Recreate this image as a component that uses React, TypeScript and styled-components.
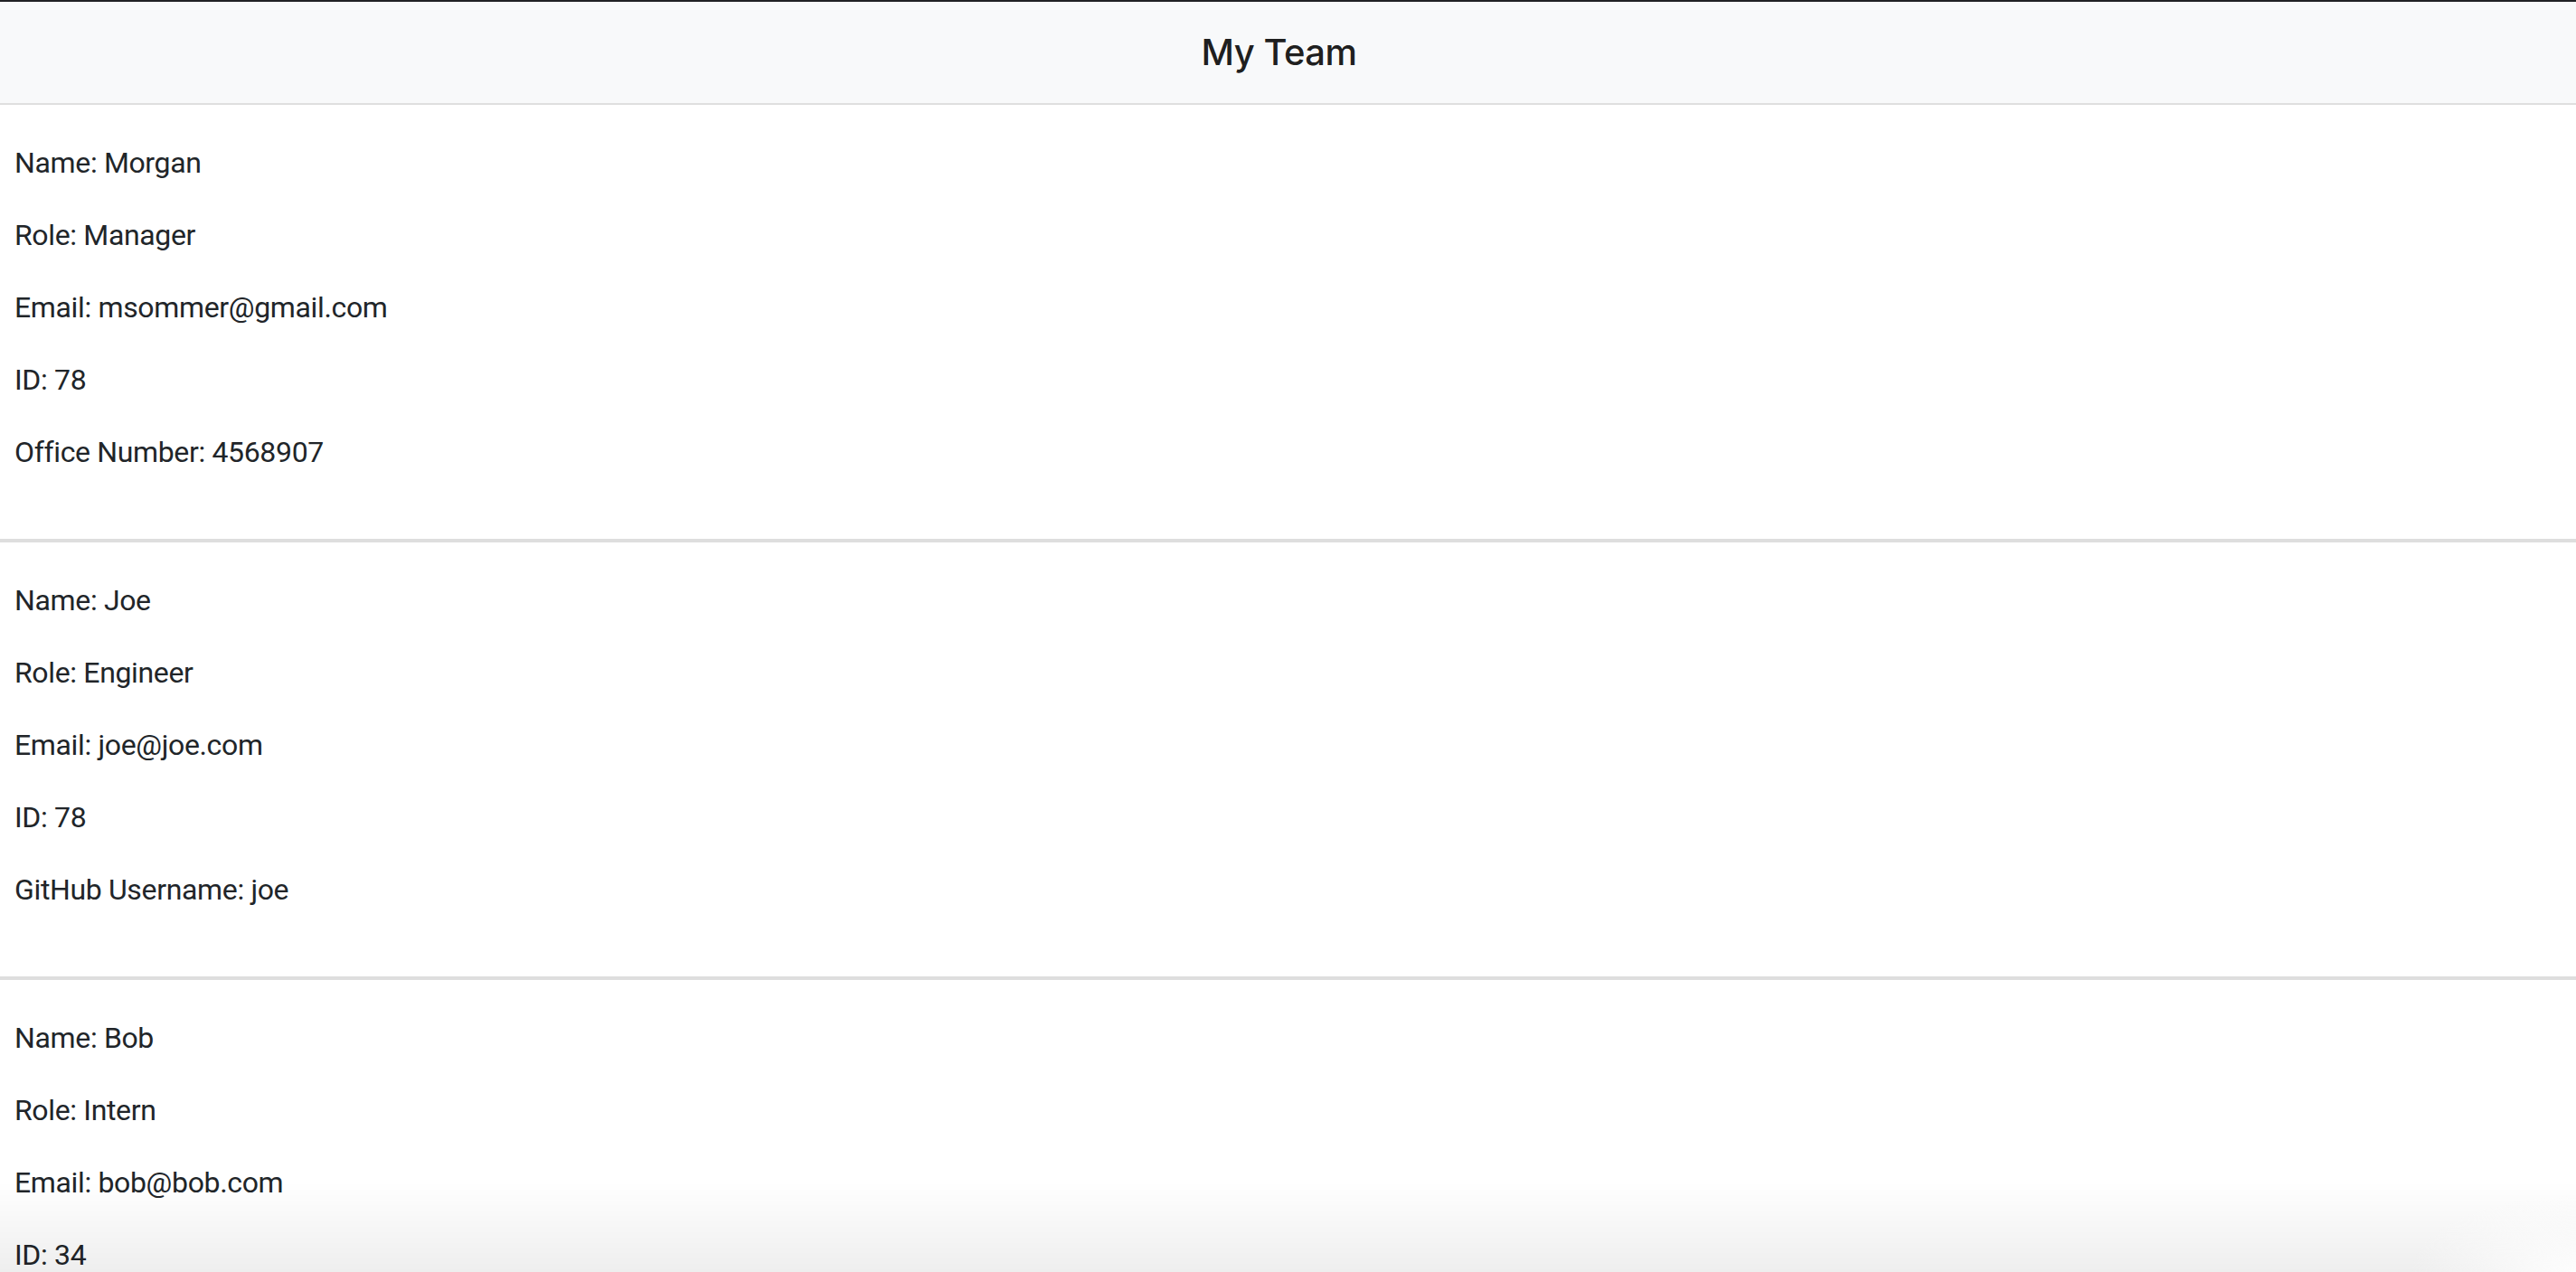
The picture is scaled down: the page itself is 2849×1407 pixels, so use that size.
import React from "react";
import styled, { createGlobalStyle } from "styled-components";

const GlobalStyle = createGlobalStyle`
  html, body {
    margin: 0;
    padding: 0;
    background: #ffffff;
  }
  body {
    font-family: Roboto, Inter, "Noto Sans", "Liberation Sans", sans-serif;
    color: #212529;
  }
  * { box-sizing: border-box; }
`;

const Page = styled.div`
  min-height: 1407px;
  border-top: 2px solid #202124;
`;

const NavBar = styled.header`
  height: 114px;
  background: #f8f9fa;
  border-bottom: 2px solid #dfdfdf;
  display: flex;
  align-items: center;
  justify-content: center;
  padding-right: 20px;
`;

const Brand = styled.h1`
  margin: 0;
  font-family: Inter, Roboto, sans-serif;
  font-size: 40px;
  font-weight: 500;
  line-height: 1.5;
  letter-spacing: -0.5px;
  color: rgba(0, 0, 0, 0.9);
`;

const Section = styled.section`
  padding: 40px 16px 40px;
  & + & {
    border-top: 4px solid #dedede;
  }
`;

const Line = styled.p`
  margin: 0 0 32px;
  font-size: 32px;
  line-height: 48px;
  letter-spacing: -0.35px;
  color: #212529;
`;

const BottomFade = styled.div`
  position: fixed;
  left: 0;
  right: 0;
  bottom: 0;
  height: 100px;
  pointer-events: none;
  background:
    radial-gradient(ellipse 260px 120px at 100% 100%, rgba(255, 255, 255, 0.9), rgba(255, 255, 255, 0) 70%),
    linear-gradient(to bottom, rgba(0, 0, 0, 0), rgba(0, 0, 0, 0.065));
`;

type Member = { label: string; value: string }[];

const team: Member[] = [
  [
    { label: "Name", value: "Morgan" },
    { label: "Role", value: "Manager" },
    { label: "Email", value: "msommer@gmail.com" },
    { label: "ID", value: "78" },
    { label: "Office Number", value: "4568907" },
  ],
  [
    { label: "Name", value: "Joe" },
    { label: "Role", value: "Engineer" },
    { label: "Email", value: "joe@joe.com" },
    { label: "ID", value: "78" },
    { label: "GitHub Username", value: "joe" },
  ],
  [
    { label: "Name", value: "Bob" },
    { label: "Role", value: "Intern" },
    { label: "Email", value: "bob@bob.com" },
    { label: "ID", value: "34" },
    { label: "School", value: "UCLA" },
  ],
];

export default function App() {
  return (
    <>
      <GlobalStyle />
      <Page>
        <NavBar>
          <Brand>My Team</Brand>
        </NavBar>
        {team.map((member, i) => (
          <Section key={i}>
            {member.map((f) => (
              <Line key={f.label}>
                {f.label}: {f.value}
              </Line>
            ))}
          </Section>
        ))}
      </Page>
      <BottomFade />
    </>
  );
}
